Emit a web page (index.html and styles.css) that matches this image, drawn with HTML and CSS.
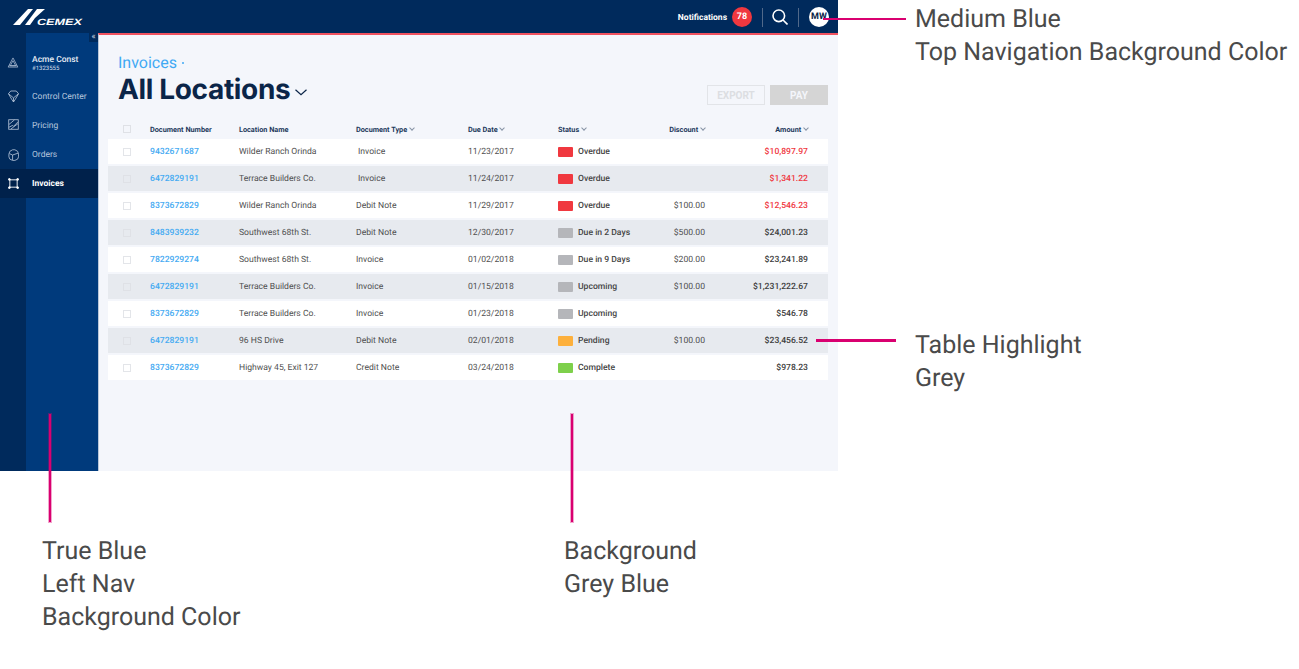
FILE: index.html
```html
<!DOCTYPE html>
<html lang="en">
<head>
    <meta charset="utf-8">
    <title>Invoices - All Locations</title>
    <link rel="stylesheet" href="styles.css">
</head>
<body>
    <div class="sheet">
        <div class="app">
            <header class="topbar">
                <div class="logo">
                    <svg width="32" height="16" viewBox="0 0 32 16"><polygon fill="#fff" points="0,16 15,0 20,0 7,16"/><polygon fill="#fff" points="12,16 24,0 32,0 22,9 17,16"/></svg>
                    <span class="logo-word">CEMEX</span>
                </div>
                <div class="top-right">
                    <span class="notif-label">Notifications</span>
                    <span class="badge">78</span>
                    <span class="divider"></span>
                    <svg class="search" width="16" height="16" viewBox="0 0 16 16" fill="none" stroke="#fff" stroke-width="1.600"><circle cx="6.800" cy="6.800" r="5.800"/><path d="M11 11l4.500 4.500"/></svg>
                    <span class="divider"></span>
                    <span class="avatar">MW</span>
                </div>
            </header>

            <div class="body">
                <nav class="sidebar">
                    <div class="rail">
                        <div class="rail-item">
                            <svg width="12" height="11" viewBox="0 0 12 12" fill="none" stroke="#b4c3d8" stroke-width=".8"><path d="M6 1L.7 11h10.600zM6 4L3 9.500h6zM1.800 9.500h8.400"/></svg>
                        </div>
                        <div class="rail-item">
                            <svg width="11" height="13" viewBox="0 0 12 14" fill="none" stroke="#b4c3d8" stroke-width=".9"><path d="M3 1h6l2.500 3L8 10l-2 3-2-3L.5 4zM3 6l3 2.500L9 6M.5 4L3 6M11.500 4L9 6M6 8.500V13"/></svg>
                        </div>
                        <div class="rail-item raised">
                            <svg width="11" height="11" viewBox="0 0 12 12" fill="none" stroke="#b4c3d8" stroke-width=".9"><rect x=".8" y=".8" width="10.400" height="10.400"/><path d="M1 6l6-5M1 9l4-2 1 1 5-5M3 11l8-6"/></svg>
                        </div>
                        <div class="rail-item">
                            <svg width="11" height="12" viewBox="0 0 12 13" fill="none" stroke="#b4c3d8" stroke-width=".9"><path d="M5 .8h2.500l3 1.700 1 3v3l-1 2.500-3 1.400H5l-3-1.400-1-2.500v-3l1-3zM5 12V6.500l6-2M5 6.500L1.500 5"/></svg>
                        </div>
                        <div class="rail-item current">
                            <svg width="11" height="11" viewBox="0 0 12 12" fill="none" stroke="#fff" stroke-width="1"><path d="M2 2h8v8H2z"/><circle cx="1.500" cy="1.500" r="1" fill="#fff"/><circle cx="10.500" cy="1.500" r="1" fill="#fff"/><circle cx="1.500" cy="10.500" r="1" fill="#fff"/><circle cx="10.500" cy="10.500" r="1" fill="#fff"/></svg>
                        </div>
                    </div>
                    <div class="menu">
                        <div class="collapse">«</div>
                        <div class="account">
                            <div class="account-name">Acme Const</div>
                            <div class="account-id">#1323555</div>
                        </div>
                        <div class="menu-item">Control Center</div>
                        <div class="menu-item">Pricing</div>
                        <div class="menu-item">Orders</div>
                        <div class="menu-item current">Invoices</div>
                    </div>
                </nav>

                <main class="content">
                    <div class="head">
                        <div>
                            <div class="crumb">Invoices <span class="crumb-dot"></span></div>
                            <h1 class="title">All Locations
                                <svg width="12" height="7" viewBox="0 0 12 7" fill="none" stroke="#0b2548" stroke-width="1.200"><path d="M.5.8L6 5.800 11.500.8"/></svg>
                            </h1>
                        </div>
                        <div class="actions">
                            <button class="btn btn-export">EXPORT</button>
                            <button class="btn btn-pay">PAY</button>
                        </div>
                    </div>

                    <div class="row row-head">
                        <span class="check"></span>
                        <span>Document Number</span>
                        <span>Location Name</span>
                        <span>Document Type <i class="caret"></i></span>
                        <span>Due Date <i class="caret"></i></span>
                        <span>Status <i class="caret"></i></span>
                        <span class="num">Discount <i class="caret"></i></span>
                        <span class="num">Amount <i class="caret"></i></span>
                    </div>

                    <div class="row">
                        <span class="check"></span><a class="doc">9432671687</a><span>Wilder Ranch Orinda</span><span class="nudge">Invoice</span><span>11/23/2017</span>
                        <span class="status"><i class="swatch red"></i>Overdue</span><span class="num"></span><span class="num amount late">$10,897.97</span>
                    </div>
                    <div class="row">
                        <span class="check"></span><a class="doc">6472829191</a><span>Terrace Builders Co.</span><span class="nudge">Invoice</span><span>11/24/2017</span>
                        <span class="status"><i class="swatch red"></i>Overdue</span><span class="num"></span><span class="num amount late">$1,341.22</span>
                    </div>
                    <div class="row">
                        <span class="check"></span><a class="doc">8373672829</a><span>Wilder Ranch Orinda</span><span>Debit Note</span><span>11/29/2017</span>
                        <span class="status"><i class="swatch red"></i>Overdue</span><span class="num">$100.00</span><span class="num amount late">$12,546.23</span>
                    </div>
                    <div class="row">
                        <span class="check"></span><a class="doc">8483939232</a><span>Southwest 68th St.</span><span>Debit Note</span><span>12/30/2017</span>
                        <span class="status"><i class="swatch grey"></i>Due in 2 Days</span><span class="num">$500.00</span><span class="num amount">$24,001.23</span>
                    </div>
                    <div class="row">
                        <span class="check"></span><a class="doc">7822929274</a><span>Southwest 68th St.</span><span>Invoice</span><span>01/02/2018</span>
                        <span class="status"><i class="swatch grey"></i>Due in 9 Days</span><span class="num">$200.00</span><span class="num amount">$23,241.89</span>
                    </div>
                    <div class="row">
                        <span class="check"></span><a class="doc">6472829191</a><span>Terrace Builders Co.</span><span>Invoice</span><span>01/15/2018</span>
                        <span class="status"><i class="swatch grey"></i>Upcoming</span><span class="num">$100.00</span><span class="num amount">$1,231,222.67</span>
                    </div>
                    <div class="row">
                        <span class="check"></span><a class="doc">8373672829</a><span>Terrace Builders Co.</span><span>Invoice</span><span>01/23/2018</span>
                        <span class="status"><i class="swatch grey"></i>Upcoming</span><span class="num"></span><span class="num amount">$546.78</span>
                    </div>
                    <div class="row">
                        <span class="check"></span><a class="doc">6472829191</a><span>96 HS Drive</span><span>Debit Note</span><span>02/01/2018</span>
                        <span class="status"><i class="swatch amber"></i>Pending</span><span class="num">$100.00</span><span class="num amount">$23,456.52</span>
                    </div>
                    <div class="row">
                        <span class="check"></span><a class="doc">8373672829</a><span>Highway 45, Exit 127</span><span>Credit Note</span><span>03/24/2018</span>
                        <span class="status"><i class="swatch green"></i>Complete</span><span class="num"></span><span class="num amount">$978.23</span>
                    </div>
                </main>
            </div>
        </div>

        <!-- callouts -->
        <div class="note note-top">Medium Blue<br>Top Navigation Background Color</div>
        <div class="note note-table">Table Highlight<br>Grey</div>
        <div class="note note-left">True Blue<br>Left Nav<br>Background Color</div>
        <div class="note note-bg">Background<br>Grey Blue</div>
        <span class="line line-top"></span>
        <span class="line line-table"></span>
        <span class="line line-left"></span>
        <span class="line line-bg"></span>
    </div>
</body>
</html>
```

FILE: styles.css
```css
* {
    box-sizing: border-box;
}

body {
    margin: 0;
    background: #fff;
    font-family: Roboto, "Liberation Sans", sans-serif;
    text-rendering: geometricPrecision;
}

.sheet {
    position: relative;
    width: 1299px;
    height: 669px;
    overflow: hidden;
}

.app {
    width: 838px;
    height: 471px;
    display: flex;
    flex-direction: column;
}

/* top bar */
.topbar {
    height: 33px;
    flex: none;
    background: #002a5c;
    display: flex;
    align-items: center;
    justify-content: space-between;
    color: #fff;
}

.logo {
    display: flex;
    align-items: flex-end;
    margin: 0 0 1px 13px;
    height: 17px;
}

.logo-word {
    font-family: "Liberation Sans", sans-serif;
    font-weight: 700;
    font-style: italic;
    font-size: 9px;
    line-height: 8px;
    margin: 0 0 -1px -8px;
    transform: scaleX(1.4);
    transform-origin: left bottom;
}

.top-right {
    display: flex;
    align-items: center;
    margin: 1px 9px 0 0;
}

.notif-label {
    padding-top: 1px;
    font-size: 8.500px;
    font-weight: 700;
    margin-right: 5px;
}

.badge,
.avatar {
    width: 20px;
    height: 20px;
    border-radius: 50%;
    display: flex;
    align-items: center;
    justify-content: center;
    font-size: 9px;
    font-weight: 700;
}

.badge {
    background: #f0383f;
}

.avatar {
    background: #fff;
    color: #0b2548;
}

.divider {
    width: 1px;
    height: 19px;
    background: #51698a;
    margin: 0 9px 0 10px;
}

.search + .divider {
    margin: 0 10px;
}

/* left nav */
.body {
    flex: 1;
    display: flex;
    min-height: 0;
}

.sidebar {
    width: 98px;
    flex: none;
    display: flex;
}

.rail {
    width: 26px;
    background: #002a5c;
    padding-top: 16px;
}

.rail-item {
    height: 29px;
    display: flex;
    align-items: center;
    justify-content: center;
}

.rail-item:first-child {
    height: 33px;
    padding-bottom: 7px;
}

.rail-item.raised {
    padding-bottom: 2px;
}

.rail-item.current {
    background: #00214b;
}

.menu {
    width: 72px;
    position: relative;
    background: #003a7c;
    padding-top: 16px;
    color: #b6c6dc;
    font-size: 8.500px;
}

.collapse {
    position: absolute;
    top: 0;
    right: 0;
    width: 9px;
    height: 9px;
    background: #002a5c;
    color: #c3cfdf;
    font-size: 9px;
    line-height: 9px;
    text-align: center;
}

.account {
    height: 33px;
    padding: 5px 0 0 6px;
    color: #e6ecf4;
}

.account-name {
    line-height: 12px;
    font-weight: 500;
}

.account-id {
    font-size: 6px;
    line-height: 6px;
    color: #d5deea;
}

.menu-item {
    height: 29px;
    line-height: 31px;
    padding-left: 6px;
}

.menu-item.current {
    background: #00214b;
    color: #fff;
    font-weight: 700;
}

/* content */
.content {
    flex: 1;
    background: #f4f6fb;
    border-top: 2px solid #f0525f;
    border-left: 1px solid #b9c6d8;
    padding: 16px 10px 0 9px;
}

.head {
    height: 68px;
    display: flex;
    justify-content: space-between;
    padding-left: 10px;
}

.crumb {
    padding-top: 1px;
    font-size: 16px;
    line-height: 21px;
    color: #40a9f4;
}

.crumb-dot {
    display: inline-block;
    width: 2.500px;
    height: 2.500px;
    margin-left: 1px;
    background: #40a9f4;
    border-radius: 50%;
    vertical-align: 4px;
}

.title {
    margin: 0;
    font-family: Inter, sans-serif;
    font-size: 28px;
    line-height: 32px;
    font-weight: 700;
    letter-spacing: -0.35px;
    color: #0b2548;
}

.title svg {
    margin-left: -2px;
    vertical-align: 3px;
}

.actions {
    display: flex;
    gap: 5px;
    padding-top: 34px;
}

.btn {
    width: 58px;
    height: 20px;
    padding: 0;
    font-family: inherit;
    font-size: 10px;
    font-weight: 700;
}

.btn-export {
    background: none;
    border: 1px solid #e2e4e8;
    color: #dcdee2;
}

.btn-pay {
    background: #d5d5d5;
    border: 0;
    color: #f4f6fb;
}

/* table */
.row {
    height: 25px;
    margin-bottom: 2px;
    padding-left: 15px;
    display: grid;
    grid-template-columns: 27px 89px 117px 112px 90px 100px 47px 103px;
    align-items: center;
    background: #fff;
    font-size: 8.600px;
    color: #4f4f4f;
    white-space: nowrap;
}

.row:nth-of-type(even) {
    background: #e7eaef;
}

.row.row-head {
    height: 20px;
    margin-bottom: 0;
    background: none;
    font-size: 7.300px;
    font-weight: 700;
    color: #23395b;
}

.check {
    width: 8px;
    height: 8px;
    background: #fff;
    border: 1px solid #e3e5e9;
}

.row:nth-of-type(even) .check {
    background: #e7eaef;
    border-color: #dfe1e6;
}

.row.row-head .check {
    background: none;
}

.doc {
    color: #45aaf2;
    font-weight: 500;
}

.nudge {
    padding-left: 2px;
}

.status {
    display: flex;
    align-items: center;
    font-weight: 500;
    color: #444;
}

.swatch {
    width: 15px;
    height: 10px;
    margin-right: 5px;
    border-radius: 1px;
}

.red {
    background: #f0383f;
}

.grey {
    background: #b5b6ba;
}

.amber {
    background: #fdb03c;
}

.green {
    background: #7ed04b;
}

.num {
    text-align: right;
}

.amount {
    font-weight: 500;
    color: #3d3d3d;
}

.amount.late {
    color: #f0383f;
}

.caret {
    display: inline-block;
    width: 4px;
    height: 4px;
    margin: 0 0 2px 1px;
    border-right: 1px solid #8793a5;
    border-bottom: 1px solid #8793a5;
    transform: rotate(45deg);
}

/* callouts */
.note {
    position: absolute;
    font-size: 25px;
    line-height: 33px;
    color: #4a4a4a;
    white-space: nowrap;
}

.note-top {
    left: 915px;
    top: 3px;
}

.note-table {
    left: 915px;
    top: 329px;
}

.note-left {
    left: 42px;
    top: 535px;
}

.note-bg {
    left: 564px;
    top: 535px;
}

.line {
    position: absolute;
    background: #d90070;
}

.line-top {
    left: 823px;
    top: 18px;
    width: 83px;
    height: 2px;
}

.line-table {
    left: 816px;
    top: 339px;
    width: 80px;
    height: 3px;
}

.line-left {
    left: 49px;
    top: 414px;
    width: 2px;
    height: 108px;
    box-shadow: 0 0 0 1px rgba(217, 0, 112, 0.35);
}

.line-bg {
    left: 571px;
    top: 414px;
    width: 2px;
    height: 108px;
    box-shadow: 0 0 0 1px rgba(217, 0, 112, 0.35);
}
```
